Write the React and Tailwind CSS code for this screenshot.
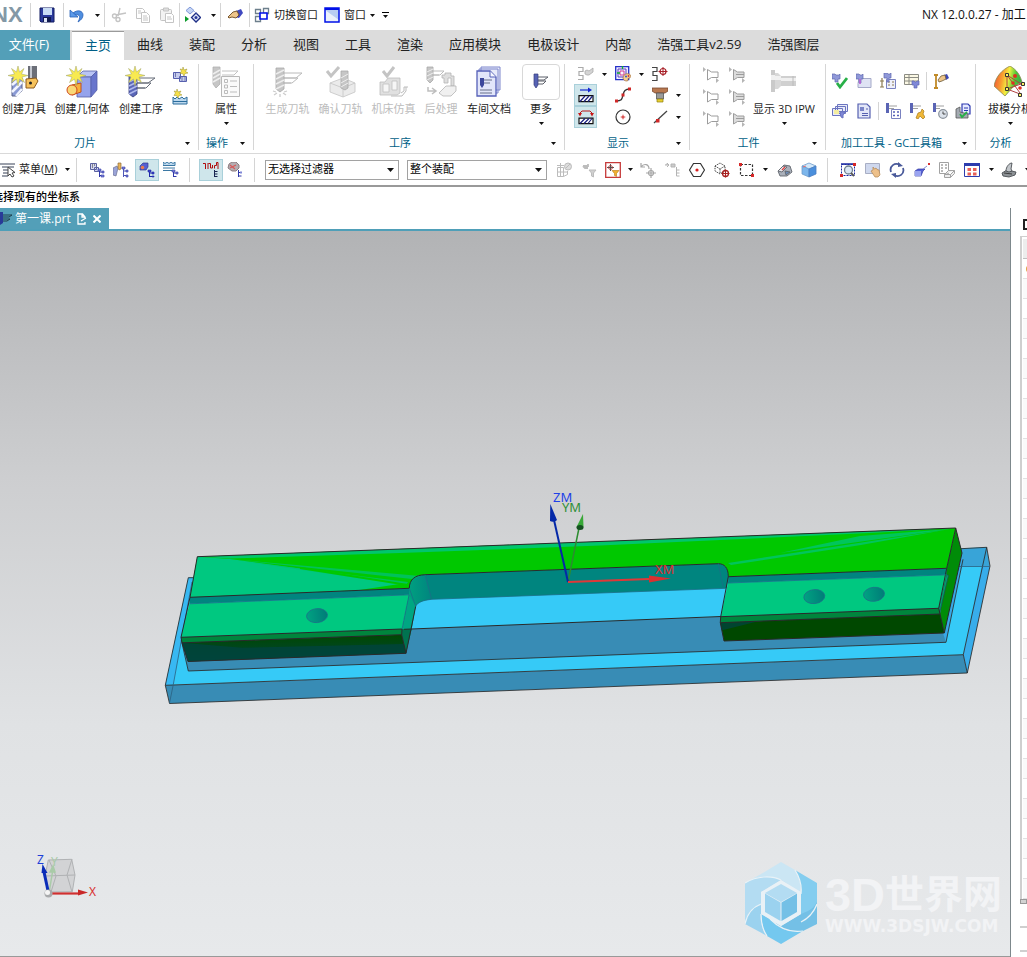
import React from "react";

const small = {
  save: (
    <g>
      <path d="M1 1h14v14H2l-1-1z" fill="#2b3a9c" stroke="#101a60" />
      <path d="M4 1h9v7H4z" fill="#c9dcf5" />
      <path d="M4 10h8v5H4z" fill="#101a50" />
      <path d="M5 11h3v4H5z" fill="#dfe6f5" />
    </g>
  ),
  undo: (
    <g>
      <path d="M4 6c5-4 10-2 10 2 0 3-2 5-5 7 2-4 2-5 1-6.500-1-1-3-1-5 0z" fill="#4f8fe0" stroke="#2a62b8" strokeWidth=".8" />
      <path d="M1 3v7l8 0z" fill="#5b9aea" stroke="#2a62b8" strokeWidth=".8" />
    </g>
  ),
  cut: (
    <g fill="none" stroke="#c4c4c4" strokeWidth="1.400">
      <path d="M9 1L7 9M15 6L5 8" />
      <circle cx="3.500" cy="9" r="2" />
      <circle cx="7" cy="12.500" r="2" />
    </g>
  ),
  copy: (
    <g fill="#fff" stroke="#c4c4c4">
      <path d="M1.500 1.500h6l2 2v8h-8z" />
      <path d="M6.500 5.500h5l3 3v7h-8z" />
      <path d="M8 9h4M8 11h5M8 13h5M3 4h3M3 6h3" />
    </g>
  ),
  paste: (
    <g fill="#f2f2f2" stroke="#c4c4c4">
      <rect x="1.500" y="2.500" width="11" height="11" rx="1" />
      <path d="M4.500 1h5v3h-5z" fill="#ddd" />
      <path d="M6.500 6.500h6l2 2v7h-8z" fill="#fff" />
      <path d="M8 10h4M8 12h5" />
    </g>
  ),
  repeat: (
    <g>
      <path d="M0 9v6l4-3z" fill="#0a9a2a" />
      <path d="M5 0l4 3.500L5 7 1 3.500z" fill="#c5d5f5" stroke="#7f97d8" />
      <path d="M11 6l4.500 4.500L11 15l-4.500-4.500z" fill="#dfe6f8" stroke="#1f2f86" strokeWidth="1.300" />
      <circle cx="11" cy="10.500" r="1.500" fill="#28389c" />
      <path d="M9 4l3 3" stroke="#7f97d8" strokeDasharray="1 1" />
    </g>
  ),
  hand: (
    <g>
      <path d="M9 4l5-2 2 4-4 5-4-1z" fill="#4048c0" />
      <path d="M1 10l5-5 4-1 2 4-3 3-4-1-3 1z" fill="#eec58a" stroke="#6b4a22" strokeWidth=".9" />
    </g>
  ),
  switchWin: (
    <g fill="#fff">
      <path d="M1.500 2.500h5v4h-5zM9.500 1.500h5v5h-5zM1.500 9.500h5v5h-5z" stroke="#6d7f8c" strokeWidth="1.300" />
      <path d="M6 6h7v6H6z" stroke="#0010e8" strokeWidth="1.600" />
    </g>
  ),
  window: (
    <g>
      <path d="M1 1h14v14H1z" fill="#b8cdf2" />
      <path d="M1 3l14 10v2H1z" fill="#fff" opacity=".7" />
      <path d="M1 1h14v14H1z" fill="none" stroke="#0010e8" strokeWidth="1.500" />
      <path d="M1 2h14" stroke="#0010e8" strokeWidth="2" />
    </g>
  ),
  programNew: (
    <g>
      <path d="M1.500 5.500h7v6h-7zM7.500 9.500h7v5h-7z" fill="#c5cbee" stroke="#565fae" />
      <path d="M3 7h1M3 9h1M9.500 11h1M9.500 13h1M12.500 11h1M12.500 13h1" stroke="#222b70" />
      <path d="M11 0l1 3 3-1-1.500 2.500L16 6l-3 .5L12 9l-1.500-2.500L8 6.500 9.500 4 8 2l2.500.500z" fill="#f6e04a" stroke="#98902c" strokeWidth=".5" />
    </g>
  ),
  methodNew: (
    <g>
      <path d="M1 15V8l2 2 2-2 2 2 3-2 2 2 3-2v7z" fill="#bcd8ee" stroke="#2b6d9c" />
      <path d="M1 12.500h14" stroke="#2b6d9c" />
      <path d="M5 0l1 3 3-1-1.500 2.500L10 6l-3 .5L6 9 4.500 6.500 2 6.500 3.500 4 2 2l2.500.5z" fill="#f6e04a" stroke="#98902c" strokeWidth=".5" />
    </g>
  ),
  menu: (
    <g>
      <path d="M0 2h15M2 5h12M3 8h6M3 11h5M2 14h6" stroke="#7b8190" strokeWidth="1.300" />
      <path d="M8 5v9l2-2 2 3 2-1-2-3 3-.5z" fill="#fff" stroke="#444" />
    </g>
  ),
  navProgram: (
    <g>
      <path d="M1.500 1.500h6v6h-6zM5.500 5.500h4v4h-4z" fill="#d5d8ee" stroke="#5b62a0" />
      <path d="M3 3h1M3 5h1M5 3h1" stroke="#333" />
      <path d="M10.500 8v7M10.500 10h4M10.500 13.500h3" stroke="#3038a8" />
      <path d="M9 7h3v2H9zM13 9h2v2h-2zM12 13h3v2h-3z" fill="#8088d8" stroke="#3038a8" strokeWidth=".6" />
    </g>
  ),
  navTool: (
    <g>
      <path d="M0 6l4-2 1 2-2 8-3-1z" fill="#9aa4d8" stroke="#6a6f90" strokeWidth=".7" />
      <path d="M5 1h3v6l-2 1-1-2z" fill="#e9b458" stroke="#8c6a3a" strokeWidth=".7" />
      <path d="M10.500 6v9M10.500 9h4M10.500 13.500h4" stroke="#5058b8" />
      <path d="M9 5h3v2H9zM13 8h2v2h-2zM13 13h2v2h-2z" fill="#8088d8" stroke="#3038a8" strokeWidth=".6" />
    </g>
  ),
  navGeom: (
    <g>
      <path d="M1 4l3-3h5v4L7 8H1z" fill="#5560d0" stroke="#333a90" strokeWidth=".7" />
      <circle cx="3.500" cy="5.500" r="1.800" fill="#e87a50" />
      <path d="M10.500 9v6M10.500 11h4M10.500 14.500h4" stroke="#2028a8" />
      <path d="M9 8h3v2H9zM13 10h2v2h-2zM13 14h2v1h-2z" fill="#4048c8" stroke="#2028a8" strokeWidth=".6" />
    </g>
  ),
  navMethod: (
    <g>
      <path d="M0 0l2 1.500L4 0l2 1.500L8 0l2 1.500L12 0v3.500H0z" fill="#bcd8ee" stroke="#3b78a4" />
      <path d="M0 6h12M0 8.500h9" stroke="#3b78a4" />
      <path d="M10.500 9v6M10.500 11h4M10.500 14.500h3" stroke="#3038a8" />
      <path d="M9 8h3v2H9zM13 10h2v2h-2z" fill="#8088d8" stroke="#3038a8" strokeWidth=".6" />
    </g>
  ),
  pathTree: (
    <g>
      <path d="M0 1.500h2.500V7M5 1v6M5.500 1.500h2V6h2V3M11.500 6.500v-3h2v-3H15V7" fill="none" stroke="#b00c0c" />
      <path d="M11.500 8v7M11.500 9.500h3M11.500 12h3M11.500 14.500h3" stroke="#1a2450" />
    </g>
  ),
  stopTree: (
    <g>
      <path d="M2 2l3-2h4l3 3v3L9 9H5L1 6z" fill="#b4acb0" stroke="#8b7c80" />
      <path d="M3 3l5 4M3 6l6-3" stroke="#d85858" strokeWidth="1.200" />
      <path d="M11.500 8v7M11.500 10.500h3M11.500 14h3" stroke="#3038a8" />
      <path d="M13 9.500h2v2h-2z" fill="#8088d8" />
    </g>
  ),
  snapGray: (
    <g fill="none" stroke="#bcbcbc">
      <path d="M.5 5.500h6v9h-6zM.5 10h10M3.500 1v13M0 3.500h7" />
      <circle cx="11" cy="4.500" r="3.500" fill="#ddd" />
      <path d="M9 6l4-4M6.500 14.500l4-2V9" />
    </g>
  ),
  filterGray: (
    <g fill="#d0d0d0" stroke="#bcbcbc">
      <path d="M2 4h5V2M2 4l2 2h3" fill="none" strokeWidth="1.800" />
      <path d="M8 8h7l-2.500 3v4l-2-1v-3z" />
    </g>
  ),
  filterRed: (
    <g>
      <path d="M.7.7h14.600v14.600H.7z" fill="#fff" stroke="#c63a3a" strokeWidth="1.300" />
      <path d="M5.500 2v7M2 5.500h7" stroke="#555" />
      <circle cx="5.500" cy="5.500" r="2" fill="none" stroke="#a33" strokeWidth=".8" />
      <path d="M7 8.500h7l-2.500 3v3l-2-1v-2z" fill="#f0b030" stroke="#b87a10" strokeWidth=".6" />
    </g>
  ),
  undoTarget: (
    <g fill="none" stroke="#a6a6a6" strokeWidth="1.200">
      <path d="M1 5c3-4 8-3 8 2M1 1v4h4" />
      <circle cx="11" cy="11" r="2.500" />
      <path d="M11 6v10M6 11h10" />
    </g>
  ),
  listGray: (
    <g fill="#ccc" stroke="#b4b4b4">
      <path d="M0 3h4l-2-2M4 3L2 5M6 2h4v3H6z" />
      <path d="M11.500 5v9M11.500 8h3M11.500 11h3M11.500 14h3" />
    </g>
  ),
  hexagon: (
    <g>
      <path d="M4.500 1.500h7l4 6.500-4 6.500h-7L.5 8z" fill="#fff" stroke="#333" strokeWidth="1.200" />
      <circle cx="8" cy="8" r="1.600" fill="#d82020" />
    </g>
  ),
  cubeTarget: (
    <g fill="none">
      <path d="M1 4l5-3 5 3v5l-5 3-5-3zM1 4l5 3 5-3M6 7v5" stroke="#444" strokeDasharray="1.500 1" />
      <circle cx="11.500" cy="11.500" r="3" stroke="#a82020" strokeWidth="1.300" />
      <path d="M11.500 7.500v8M7.500 11.500h8" stroke="#a82020" />
    </g>
  ),
  marquee: (
    <g>
      <path d="M1.500 2.500h12v11h-12z" fill="none" stroke="#333" strokeWidth="1.200" strokeDasharray="2.500 1.500" />
      <path d="M0 1h3v3H0zM12 12h3v3h-3z" fill="#d82828" />
    </g>
  ),
  eraser: (
    <g stroke="#62666e" strokeWidth=".9">
      <path d="M1 9l6-6 6 1 2 6-5 4H3z" fill="#aab0ba" />
      <path d="M1 9l5-5 4 1-5 5z" fill="#e8eaee" />
      <path d="M5 8l3-3" stroke="#e04040" strokeWidth="1.500" />
      <path d="M8 9l5 1-4 3z" fill="#6d8cb8" />
    </g>
  ),
  cubeBlue: (
    <g>
      <path d="M1 4l7-3 7 3-7 3z" fill="#d2e8fa" stroke="#6f9ccc" strokeWidth=".8" />
      <path d="M1 4l7 3v8l-7-3z" fill="#7cb6ec" stroke="#6f9ccc" strokeWidth=".8" />
      <path d="M15 4L8 7v8l7-3z" fill="#4a8fdc" stroke="#4a7cc0" strokeWidth=".8" />
      <path d="M2 5l3-1" stroke="#e37070" />
    </g>
  ),
  fitZoom: (
    <g>
      <path d="M1.500 2.500h13v11h-13z" fill="none" stroke="#1a28a0" strokeDasharray="2 1" />
      <path d="M1 2h14" stroke="#1a28a0" strokeWidth="1.500" />
      <circle cx="8.500" cy="8" r="4" fill="#dbe8f4" stroke="#6e7f90" strokeWidth="1.300" />
      <path d="M11 11l3 3" stroke="#555" strokeWidth="1.800" />
      <path d="M13 1h3v3h-3zM0 12h3v3H0z" fill="#d82828" />
    </g>
  ),
  pan: (
    <g>
      <path d="M.5 1.500h14v10H.500z" fill="#cfd8ee" stroke="#a8aec4" />
      <path d="M6 9l2-1V5l1.500 2L11 6l1 1.500 2 .5 1 5-2 2h-3z" fill="#edc08a" stroke="#b08552" strokeWidth=".7" />
    </g>
  ),
  rotate: (
    <g fill="none" stroke="#4a5a9a" strokeWidth="1.800">
      <path d="M2 10C0 4 6 0 11 3M14 6c2 6-4 10-9 7" />
      <path d="M9 0l5 4-5 1zM7 16l-5-4 5-1z" fill="#4a5a9a" stroke="none" />
    </g>
  ),
  persp: (
    <g>
      <path d="M1 9l3-2h7l-2 2-2 5-6 0z" fill="#5560d4" stroke="#3038a0" strokeWidth=".7" />
      <path d="M1 9h6v5H1z" fill="#9aa4f0" />
      <path d="M9 7l4-3" stroke="#8890d8" />
      <path d="M14 1h2v2h-2z" fill="#d83030" />
    </g>
  ),
  sheet: (
    <g fill="#fff" stroke="#a2a2a2">
      <path d="M.500.500h9v11h-9z" />
      <path d="M2 3h2M6 3h2M2 6h2M6 6h2M2 9h2" strokeWidth="1.500" />
      <path d="M5.500 12.500l4-4h6v3l-4 4h-6zM5.500 12.500h6l4-4M11.500 12.500v3" fill="#eee" />
    </g>
  ),
  layout: (
    <g>
      <path d="M.5 1.500h15v13H.500z" fill="#fff" stroke="#2c3cae" />
      <path d="M0 1h16v3H0z" fill="#2c3cae" />
      <path d="M3.500 6H7v3H3.500zM9 6h3.500v3H9zM3.500 10.500H7v3H3.500zM9 10.500h3.500v3H9z" fill="#e86058" />
    </g>
  ),
  shading: (
    <g stroke="#4a4e52" strokeWidth=".9">
      <path d="M1 11l5-3 9 2-1 3-6 2-6-1z" fill="#8d9296" />
      <path d="M5 9c0-4 3-8 6-8l-1 6 1 2-3 1z" fill="#c2c6ca" />
      <path d="M3 11l8 1" stroke="#333" />
    </g>
  ),
  toolPathGray: (
    <g fill="none" stroke="#aaa" strokeWidth="1.200">
      <path d="M0 1.500h5v4H1v4h4v4H0" />
      <path d="M7 5l2-1 2 1 4-3v4l-4 3H9l-2-1z" fill="#d4d4d4" strokeWidth=".8" />
    </g>
  ),
  palette: (
    <g>
      <path d="M.7.7h13v13h-13z" fill="#f0f0ff" stroke="#2530c8" strokeWidth="1.300" />
      <path d="M3 3h8v8H3z" fill="none" stroke="#6040c0" />
      <path d="M5 5h4v4H5z" fill="#f8f8ff" stroke="#d03890" />
      <path d="M7.500 0v3M2 7h3" stroke="#10b030" strokeWidth="1.300" />
      <path d="M8 12c0-3 3-5 6-4s2 4 0 4 0 3-2 3-4-1-4-3z" fill="#f4cf90" stroke="#a06a3a" strokeWidth=".7" />
      <circle cx="11" cy="10.500" r="1" fill="#3050d0" />
      <circle cx="13.500" cy="10" r=".9" fill="#d03030" />
    </g>
  ),
  pathTarget: (
    <g fill="none">
      <path d="M0 1.500h5v4H1v4h4v5H0" stroke="#444" strokeWidth="1.200" />
      <circle cx="11" cy="5.500" r="3" stroke="#a82028" strokeWidth="1.200" />
      <path d="M11 1v9M6.500 5.500h9" stroke="#a82028" />
    </g>
  ),
  hatchArrow: (
    <g>
      <path d="M2 3h9" stroke="#1428d0" strokeWidth="1.200" />
      <path d="M10 .5L14 3l-4 2.500z" fill="#1428d0" />
      <path d="M1 8.700h14v6H1z" fill="#fff" stroke="#111" strokeWidth="1.200" />
      <path d="M2 14.500l5-5.500M6 14.500L11 9M10 14.500L14.500 9" stroke="#1a2080" strokeWidth="1.200" />
    </g>
  ),
  hatchLoop: (
    <g>
      <path d="M2 6V4l2-2h8l2 2v2" fill="none" stroke="#b81818" />
      <path d="M0 4h4L2 7.500zM12 4h4l-2 3.500z" fill="#c81818" />
      <path d="M1 9.200h14v5.500H1z" fill="#fff" stroke="#111" strokeWidth="1.200" />
      <path d="M2 14.500l5-5M6 14.500l5-5M10 14.500l4-5" stroke="#1a2080" strokeWidth="1.200" />
    </g>
  ),
  curve: (
    <g>
      <path d="M1 14c6 0 6-2 7-6s2-6 7-6" fill="none" stroke="#333" strokeWidth="1.300" />
      <path d="M0 12.500h3v3H0zM6.500 6.500h3v3h-3zM13 .5h3v3h-3z" fill="#d02828" />
    </g>
  ),
  circle: (
    <g>
      <circle cx="8" cy="8" r="7" fill="#fff" stroke="#333" strokeWidth="1.200" />
      <circle cx="8" cy="8" r="1.500" fill="#d02828" />
      <path d="M8 5.500v5M5.500 8h5" stroke="#e07070" strokeWidth=".8" />
    </g>
  ),
  holder: (
    <g>
      <path d="M0 1h16v3l-3 2H3L0 4z" fill="#b87850" stroke="#7a4a30" strokeWidth=".8" />
      <path d="M4.500 6h7v6h-7z" fill="#9a9a9a" stroke="#555" strokeWidth=".8" />
      <path d="M5 12h6v3H5z" fill="#e8d030" stroke="#8c7c10" strokeWidth=".7" />
    </g>
  ),
  line: (
    <g>
      <path d="M2 14L15 2" stroke="#444" strokeWidth="1.300" />
      <path d="M4 10h3.500v3.500H4z" fill="#d02828" />
    </g>
  ),
  ipwA: (
    <g fill="#fff" stroke="#9c9c9c">
      <path d="M4.500 2.500l4 2.500h6.500v5.500H8.500l-4 2.500z" />
      <path d="M0 0v5l3-2.500z" fill="#b5b5b5" stroke="none" />
      <path d="M13 11v5l3-2.500z" fill="#b5b5b5" stroke="none" />
    </g>
  ),
  ipwB: (
    <g fill="#dcdcdc" stroke="#9c9c9c">
      <path d="M4.500 2.500l4 2.500h6.500v5.500H8.500l-4 2.500z" />
      <path d="M7 7.500h8" />
      <path d="M0 0v5l3-2.500z" fill="#b5b5b5" stroke="none" />
      <path d="M13 11v5l3-2.500z" fill="#b5b5b5" stroke="none" />
    </g>
  ),
  gcCheck: (
    <g>
      <path d="M0 1h3l1 1h3l1-1v5H6v3H3V6H0z" fill="#8f98d8" stroke="#6068b0" strokeWidth=".7" />
      <path d="M5 10l3 4 7-9" fill="none" stroke="#28b048" strokeWidth="2.800" />
    </g>
  ),
  gcPart: (
    <g>
      <path d="M3 5.500h12v9H2v-4z" fill="#dfe3f4" stroke="#a4a9c8" />
      <path d="M0 1h3l1 1h2l1-1v5H5v4H3V6H0z" fill="#8f98d8" stroke="#6068b0" strokeWidth=".7" />
      <path d="M4 6v5" stroke="#c060d8" strokeWidth="1.500" />
    </g>
  ),
  gcTree: (
    <g>
      <path d="M6.500 6.500h9v9h-9z" fill="#eef0fb" stroke="#7a82c0" />
      <path d="M8 9h2M8 12h2M12 9h2M12 12h2M0 8h4M2 5v9M0 14h4" stroke="#8a7a50" strokeWidth="1.200" />
      <path d="M4 0h3l1 1h2l1-1v5H9v4H7V5H4z" fill="#8f98d8" stroke="#6068b0" strokeWidth=".7" />
    </g>
  ),
  gcTable: (
    <g>
      <path d="M.5 1.500h14v10H.5zM.5 4.500h14M.5 8h14M5 1.500v10" fill="#fbf8e4" stroke="#8c8c84" />
      <path d="M8 8h2l1 1h1l1-1h2v4h-2v3h-3v-3H8z" fill="#7f88d8" stroke="#6068b0" strokeWidth=".7" />
    </g>
  ),
  gcFlag: (
    <g>
      <path d="M1 2h4M1 15h4M3 2v13" stroke="#c08a28" strokeWidth="1.800" />
      <path d="M11 2l3-1 2 4-3 2z" fill="#3c48b8" />
      <path d="M5 7l3-4 4-1 1 4-4 2-3 1z" fill="#eec58a" stroke="#6b5a3a" strokeWidth=".8" />
    </g>
  ),
  gcCards: (
    <g fill="#e9ecf8" stroke="#6b74c0">
      <path d="M5.500 1.500h10v7h-10zM3.500 3.500h10v7h-10zM.5 5.500h10v7H.500z" />
      <path d="M8 9h5l-2 3v3l-2-1z" fill="#8088d8" />
      <path d="M2 7h5v4H2z" fill="#f4eda0" stroke="none" />
    </g>
  ),
  gcDoc: (
    <g>
      <path d="M2 1h9l3 3v11H2z" fill="#e2e6f8" stroke="#5560b0" strokeWidth="1.200" />
      <path d="M4 4h4v4H4z" fill="#7a84c8" />
      <path d="M6 10.500h6M6 12.500h6M10 6h2" stroke="#5560b0" />
    </g>
  ),
  gcList: (
    <g>
      <path d="M1 0h3v10H1z" fill="#5a64b4" />
      <path d="M4 3h8M4 5.500h5" stroke="#888" strokeWidth=".8" />
      <path d="M6.500 6.500h9v9h-9z" fill="#fff" stroke="#7a82c0" />
      <path d="M8 9h2M8 12.500h2M12 9h2M12 12.500h2" stroke="#5560b8" strokeWidth="1.500" />
    </g>
  ),
  gcWrench: (
    <g>
      <path d="M1 0h3v10H1z" fill="#5a64b4" />
      <path d="M4 3h8M4 5.500h5" stroke="#888" strokeWidth=".8" />
      <path d="M7 15l2-5 3-1 1-3 2 2-1 3 2 3-2 2-3-3-2 3z" fill="#f0b838" stroke="#a87818" strokeWidth=".7" />
    </g>
  ),
  gcClock: (
    <g>
      <path d="M1 0h3v9H1z" fill="#5a64b4" />
      <path d="M4 3h8M4 5.500h4" stroke="#888" strokeWidth=".8" />
      <circle cx="11" cy="11" r="4.300" fill="#dce2ea" stroke="#8a929c" strokeWidth="1.200" />
      <path d="M11 8.500V11h2.500" fill="none" stroke="#444" />
    </g>
  ),
  gcPrint: (
    <g>
      <path d="M7 1h6l2 2v8H7z" fill="#e6eaff" stroke="#2c38b0" strokeWidth="1.200" />
      <path d="M9 5h4M9 7.500h4" stroke="#2c38b0" />
      <path d="M1 6l4-2v5l8 2v4H1z" fill="#a4aab2" stroke="#555" strokeWidth=".8" />
      <path d="M5 11l2 3 5-5" fill="none" stroke="#28b048" strokeWidth="1.800" />
    </g>
  ),
};

const star = (
  <path
    d="M10 0l1.500 6L16 2.500 13.500 8l6.500 1.500-6 1.500 2.500 5.500-5-3.500L10 20l-1.500-7-5 3.500L6 11 0 9.500 6.500 8 3.500 2.500 8.500 6z"
    fill="#f8ea50"
    stroke="#a0a468"
    strokeWidth=".5"
  />
);

const large = {
  tool: (
    <g>
      <path d="M20 0h9v14h-9z" fill="#6c6f78" />
      <path d="M22 0h2v14h-2z" fill="#c4c8d0" />
      <path d="M18 13l10-1 2 3-4 7h-8z" fill="#f6c25c" stroke="#8c5a1c" />
      <circle cx="22.500" cy="17" r="1.500" fill="#222" />
      <path d="M4 12h10v13l-5 5H4z" fill="#8a9ad4" stroke="#5a6288" />
      <path d="M4 26l10-10M4 19l7-6M8 30l6-7" stroke="#f2f5ff" strokeWidth="2.500" />
      {star}
    </g>
  ),
  geometry: (
    <g>
      <path d="M11 11l6-6h14l-6 6z" fill="#b9c4f4" stroke="#5660a8" strokeWidth=".8" />
      <path d="M11 11h14v20H11z" fill="#95a3ec" stroke="#5660a8" strokeWidth=".8" />
      <path d="M25 11l6-6v19l-6 7z" fill="#6875cc" stroke="#5660a8" strokeWidth=".8" />
      <path d="M6 19l9-2v9l-9 3z" fill="#f6b03c" stroke="#c0501c" />
      <circle cx="6" cy="24" r="5" fill="#f9d878" stroke="#d0481c" />
      {star}
    </g>
  ),
  operation: (
    <g fill="none">
      <path d="M12 12h18l-7 5H12M12 17h14l-5 5h-9M12 22h8" stroke="#666c78" />
      <path d="M4 10h8v18l-4 3-4-3z" fill="#5a66b8" stroke="#363e7c" strokeWidth=".8" />
      <path d="M4 16l8-4M4 20l8-4M4 24l8-4M4 28l8-4" stroke="#aeb8ec" strokeWidth="1.500" />
      {star}
    </g>
  ),
  attributes: (
    <g>
      <path d="M12 5h16l-4 4H12M12 11h6" fill="none" stroke="#c2c2c2" />
      <path d="M3 1h7v17l-4 4-3-4z" fill="#c6c6c6" stroke="#b0b0b0" strokeWidth=".8" />
      <path d="M3 8l7-4M3 12l7-4M3 16l7-4" stroke="#eee" strokeWidth="1.500" />
      <path d="M11.500 10.500h18v20h-18z" fill="#fafafa" stroke="#b8b8b8" />
      <path d="M14.500 13.500h3v3h-3zM14.500 19h3v3h-3zM14.500 24.500h3v3h-3zM20 15h7M20 20.500h7M20 26h7" fill="none" stroke="#bcbcbc" />
    </g>
  ),
  generate: (
    <g>
      <path d="M12 7h18l-6 5H12M12 12h14l-6 5h-8M12 17h7" fill="none" stroke="#bababa" />
      <path d="M4 2h8v21l-4 3-4-3z" fill="#c6c6c6" stroke="#a8a8a8" strokeWidth=".8" />
      <path d="M4 8l8-4M4 13l8-4M4 18l8-4M4 23l8-4" stroke="#ececec" strokeWidth="1.500" />
      <path d="M1 25l3 1M2 29l3-2M8 28v3M14 29l-3-2M15 25l-3 1" stroke="#ccc" strokeWidth="1.300" />
    </g>
  ),
  verify: (
    <g>
      <path d="M5 17l13-5 12 5v9l-12 5-13-5z" fill="#ebebeb" stroke="#c4c4c4" strokeWidth=".8" />
      <path d="M5 17l13 5 12-5M18 22v9" fill="none" stroke="#c4c4c4" strokeWidth=".8" />
      <path d="M16 5h7v17l-3 2-4-2z" fill="#c6c6c6" stroke="#a8a8a8" strokeWidth=".8" />
      <path d="M16 12l7-4M16 17l7-4M16 21l7-4" stroke="#eee" />
      <path d="M2 5l4 5L14 1" fill="none" stroke="#c4c4c4" strokeWidth="3" />
    </g>
  ),
  simulate: (
    <g>
      <path d="M2 16h5l3-4h12v15l-3 2H2z" fill="#e0e0e0" stroke="#bcbcbc" strokeWidth=".8" />
      <path d="M5 18h6v8H5zM14 15h5v9h-5z" fill="#f6f6f6" stroke="#c0c0c0" strokeWidth=".8" />
      <path d="M23 27l3-2v-4h4M28 21v4l-4 5H13" fill="none" stroke="#bcbcbc" />
      <path d="M5 5l4 5L16 1" fill="none" stroke="#c4c4c4" strokeWidth="3" />
    </g>
  ),
  post: (
    <g>
      <path d="M8 5h11l-4 4H8M8 9h6" fill="none" stroke="#bcbcbc" />
      <path d="M2 1h6v13l-3 3-3-3z" fill="#c6c6c6" stroke="#a8a8a8" strokeWidth=".8" />
      <path d="M2 6l6-3M2 10l6-3M2 14l6-3" stroke="#eee" />
      <path d="M17 9h3V7h6v3h3v10h-3v-8h-3v5h-4v-5h-2z" fill="#dedede" stroke="#b4b4b4" strokeWidth=".8" />
      <path d="M14 27l7-7h10v5l-5 5h-8z" fill="#f0f0f0" stroke="#b4b4b4" strokeWidth=".8" />
      <path d="M3 21v4h7M7 22l4 3-4 3" fill="none" stroke="#bebebe" strokeWidth="1.500" />
    </g>
  ),
  shopDoc: (
    <g>
      <path d="M8 1h19v23H8zM6 3h19v24H6z" fill="#e8ebfa" stroke="#7c86cc" />
      <path d="M4 5h13l6 6v19H4z" fill="#e2e6fa" stroke="#5560b8" strokeWidth="1.300" />
      <path d="M17 5v6h6" fill="#f6f8ff" stroke="#5560b8" />
      <path d="M7 12h4v7l-2 3-2-3z" fill="#3c479c" />
      <path d="M11 14h8M11 17h6M7 24h12M7 27h12" stroke="#666e88" />
    </g>
  ),
  more: (
    <g>
      <path d="M13 11h10l-4 3h-6M13 15h8l-3 3h-5" fill="none" stroke="#5a5e68" />
      <path d="M9 8h4v11l-2 3-2-3z" fill="#5663b4" stroke="#363e7c" strokeWidth=".7" />
    </g>
  ),
  ipw: (
    <g>
      <path d="M3 4h4v22H3z" fill="#cacaca" />
      <path d="M7 7h3l3 3v10l-3 3H7z" fill="#d8d8d8" />
      <path d="M13 10h15v10H13z" fill="#d0d0d0" />
      <path d="M3 9h4v5H3zM7 10h6v4H7zM13 12h15v3H13z" fill="#f0f0f0" />
      <path d="M25 10v10" stroke="#bcbcbc" />
    </g>
  ),
  draft: (
    <g>
      <defs>
        <linearGradient id="draftFill" x1="0" x2="1" y1="0.300" y2="0.500">
          <stop offset="0" stopColor="#f05038" />
          <stop offset=".3" stopColor="#f8a030" />
          <stop offset=".5" stopColor="#f2f040" />
          <stop offset=".75" stopColor="#48c838" />
          <stop offset="1" stopColor="#38a848" />
        </linearGradient>
      </defs>
      <path d="M0 20C2 10 8 4 16 0c7 4 10 9 12 16l-9 5-8 9z" fill="url(#draftFill)" stroke="#8c8c50" strokeWidth=".8" />
      <path d="M13 9v14l14-5zM13 9l13 18M13 23l13 5" fill="none" stroke="#b04040" />
      <path d="M11.500 7.500h3v3h-3zM11.500 21.500h3v3h-3zM27.500 16.500h3v3h-3zM24.500 27.500h3v3h-3z" fill="#fff060" stroke="#333" />
      <circle cx="21" cy="10" r="2" fill="#e03020" />
      <circle cx="19" cy="17" r="1.800" fill="#e03020" />
      <circle cx="26" cy="22" r="1.800" fill="#e03020" />
    </g>
  ),
};

const Sm = ({ name }) => (
  <svg viewBox="0 0 16 16" className="size-4 shrink-0" aria-hidden="true">
    {small[name]}
  </svg>
);

const Lg = ({ name }) => (
  <svg viewBox="0 0 32 32" className="size-8 shrink-0" aria-hidden="true">
    {large[name]}
  </svg>
);

const Arrow = () => (
  <svg viewBox="0 0 5 3" className="h-[3px] w-[5px] shrink-0" aria-hidden="true">
    <path d="M0 0h5L2.500 3z" fill="#111" />
  </svg>
);

const Drop = ({ label = "展开", className = "h-5 w-3" }) => (
  <button aria-label={label} className={"flex shrink-0 items-center justify-center " + className}>
    <Arrow />
  </button>
);

const IconButton = ({ name, label, active, className = "h-[22px] w-6" }) => (
  <button
    aria-label={label}
    className={
      "flex shrink-0 items-center justify-center " +
      (active ? "border border-[#a9d0da] bg-[#cfe6eb] " : "") +
      className
    }
  >
    <Sm name={name} />
  </button>
);

const BigButton = ({ name, label, width, disabled, arrow, boxed }) => (
  <button
    disabled={disabled}
    className={
      "flex shrink-0 flex-col items-center whitespace-nowrap text-[11px] leading-4 " +
      (disabled ? "text-[#bcbcbc] " : "text-[#1e1e1e] ") +
      width
    }
  >
    <span
      className={
        boxed
          ? "flex h-9 w-[38px] items-center justify-center rounded border border-[#d8d8d8]"
          : "flex h-9 items-center justify-center"
      }
    >
      <Lg name={name} />
    </span>
    <span className="mt-px">{label}</span>
    {arrow && (
      <span className="flex h-3 items-center">
        <Arrow />
      </span>
    )}
  </button>
);

const Group = ({ title, width, children }) => (
  <section className={"mt-1 mb-[3px] flex shrink-0 flex-col border-r border-[#d6d6d6] " + width}>
    <div className="flex h-[72px] shrink-0 items-start">{children}</div>
    <div className="flex h-3.5 shrink-0 items-center">
      <h2 className="flex-1 text-center text-[11px] leading-3.5 whitespace-nowrap text-[#005f87]">{title}</h2>
      <Drop label={title + "选项"} className="mr-1 h-3 w-3.5" />
    </div>
  </section>
);

const Sep = ({ className = "h-6" }) => <span className={"w-px shrink-0 bg-[#d4d4d4] " + className} />;

const Combo = ({ value, label, width }) => (
  <label className={"relative block shrink-0 " + width}>
    <span className="sr-only">{label}</span>
    <select className="block h-5 w-full appearance-none border border-[#a2a2a2] bg-white pl-0.5 text-[11px] text-black outline-none">
      <option>{value}</option>
    </select>
    <svg viewBox="0 0 7 4" className="pointer-events-none absolute top-2 right-[5px] h-1 w-[7px]" aria-hidden="true">
      <path d="M0 0h7L3.500 4z" fill="#111" />
    </svg>
  </label>
);

const tabs = ["曲线", "装配", "分析", "视图", "工具", "渲染", "应用模块", "电极设计", "内部", "浩强工具v2.59", "浩强图层"];

function TitleBar() {
  return (
    <header className="flex h-[30px] shrink-0 items-center bg-white text-[11px] text-[#222]">
      <span className="-ml-2 w-[34px] shrink-0 font-['Liberation_Sans'] text-[22px] leading-6 font-bold text-[#8398a6]">NX</span>
      <span className="w-1 shrink-0" />
      <Sep />
      <IconButton name="save" label="保存" className="h-6 w-8" />
      <Sep />
      <IconButton name="undo" label="撤消" className="h-6 w-[26px]" />
      <Drop className="h-5 w-3.5" />
      <Sep />
      <IconButton name="cut" label="剪切" className="ml-0.5 h-6 w-6" />
      <IconButton name="copy" label="复制" className="h-6 w-6" />
      <IconButton name="paste" label="粘贴" className="h-6 w-6" />
      <Sep />
      <IconButton name="repeat" label="重复命令" className="h-6 w-[26px]" />
      <Drop className="h-5 w-3.5" />
      <Sep />
      <IconButton name="hand" label="触控模式" className="h-6 w-7" />
      <Sep />
      <button className="flex shrink-0 items-center gap-1 pl-1">
        <Sm name="switchWin" />
        切换窗口
      </button>
      <button className="flex shrink-0 items-center gap-1 pl-1.5">
        <Sm name="window" />
        窗口
        <Arrow />
      </button>
      <button aria-label="自定义" className="ml-1 flex w-3 shrink-0 flex-col items-center gap-0.5">
        <span className="h-px w-[7px] bg-black" />
        <Arrow />
      </button>
      <h1 className="ml-auto w-[105px] shrink-0 overflow-hidden text-[12px] whitespace-nowrap text-[#111]">NX 12.0.0.27 - 加工</h1>
    </header>
  );
}

function TabRow() {
  return (
    <nav className="flex h-[30px] shrink-0 bg-[#dcdcdc] text-[13px] whitespace-nowrap text-[#222]">
      <button className="mr-0.5 w-[70px] shrink-0 bg-[#539fb8] pr-3 text-white">文件(F)</button>
      <button className="mt-px shrink-0 border-t border-[#9a9a9a] bg-white px-[13px] text-[#005f87]">主页</button>
      {tabs.map((t) => (
        <button key={t} className="shrink-0 px-[13px]">
          {t}
        </button>
      ))}
    </nav>
  );
}

function Ribbon() {
  return (
    <div className="flex h-[93px] shrink-0 bg-white">
      <Group title="刀片" width="w-[209px] -ml-2.5">
        <span className="w-2.5 shrink-0" />
        <BigButton name="tool" label="创建刀具" width="w-12" />
        <BigButton name="geometry" label="创建几何体" width="w-[68px]" />
        <BigButton name="operation" label="创建工序" width="w-[50px]" />
        <div className="ml-0.5 flex flex-col">
          <IconButton name="programNew" label="创建程序" />
          <IconButton name="methodNew" label="创建方法" />
        </div>
      </Group>
      <Group title="操作" width="w-[55px]">
        <BigButton name="attributes" label="属性" width="w-full" arrow />
      </Group>
      <Group title="工序" width="w-[311px]">
        <span className="w-[7px] shrink-0" />
        <BigButton name="generate" label="生成刀轨" width="w-[53px]" disabled />
        <BigButton name="verify" label="确认刀轨" width="w-[53px]" disabled />
        <BigButton name="simulate" label="机床仿真" width="w-[53px]" disabled />
        <BigButton name="post" label="后处理" width="w-[42px]" disabled />
        <BigButton name="shopDoc" label="车间文档" width="w-[54px]" />
        <BigButton name="more" label="更多" width="w-[50px]" arrow boxed />
      </Group>
      <Group title="显示" width="w-[125px]">
        <div className="grid grid-cols-[25px_12px_25px_12px_25px_12px] items-center justify-items-center pl-2">
          <IconButton name="toolPathGray" label="刀轨" className="h-5 w-6" />
          <Drop />
          <IconButton name="palette" label="颜色" className="h-5 w-6" />
          <Drop />
          <IconButton name="pathTarget" label="定位" className="h-5 w-6" />
          <span />
          <IconButton name="hatchArrow" label="显示运动" active className="h-[22px] w-[23px]" />
          <span />
          <IconButton name="curve" label="曲线" />
          <span />
          <IconButton name="holder" label="刀柄" />
          <Drop />
          <IconButton name="hatchLoop" label="显示切削" active className="h-[22px] w-[23px]" />
          <span />
          <IconButton name="circle" label="圆" />
          <span />
          <IconButton name="line" label="直线" />
          <Drop />
        </div>
      </Group>
      <Group title="工件" width="w-[136px]">
        <div className="grid shrink-0 grid-cols-[26px_26px] justify-items-center pl-2">
          {["a", "b", "c"].map((k) => (
            <React.Fragment key={k}>
              <IconButton name="ipwA" label={"工件 " + k} />
              <IconButton name="ipwB" label={"毛坯 " + k} />
            </React.Fragment>
          ))}
        </div>
        <BigButton name="ipw" label="显示 3D IPW" width="w-[68px]" arrow />
      </Group>
      <Group title="加工工具 - GC工具箱" width="w-[150px]">
        <div className="flex flex-col gap-2 pt-1.5 pl-0.5">
          <div className="flex items-center">
            <IconButton name="gcCheck" label="检查" />
            <IconButton name="gcPart" label="部件" />
            <IconButton name="gcTree" label="结构" />
            <IconButton name="gcTable" label="表格" />
            <Sep className="mx-0.5 h-[18px]" />
            <IconButton name="gcFlag" label="标记" />
          </div>
          <div className="flex items-center">
            <IconButton name="gcCards" label="卡片" />
            <IconButton name="gcDoc" label="文档" />
            <Sep className="mx-0.5 h-[18px]" />
            <IconButton name="gcList" label="列表" />
            <IconButton name="gcWrench" label="维护" className="h-[22px] w-[23px]" />
            <IconButton name="gcClock" label="时间" className="h-[22px] w-[23px]" />
            <IconButton name="gcPrint" label="输出" />
          </div>
        </div>
      </Group>
      <Group title="分析" width="w-[68px]">
        <span className="w-2 shrink-0" />
        <BigButton name="draft" label="拔模分析" width="w-[52px]" arrow />
      </Group>
    </div>
  );
}

function SelectionBar() {
  return (
    <div className="flex h-[34px] shrink-0 items-center border-t border-b-2 border-t-[#d9d9d9] border-b-[#999] bg-white">
      <button className="flex w-[70px] shrink-0 items-center gap-[3px] text-[11px] whitespace-nowrap text-[#222]">
        <Sm name="menu" />
        <span className="flex-1 text-left">
          菜单(<u>M</u>)
        </span>
        <Arrow />
      </button>
      <Sep className="ml-1.5 h-6" />
      <IconButton name="navProgram" label="程序顺序视图" className="ml-2 h-[22px] w-6" />
      <IconButton name="navTool" label="机床视图" />
      <IconButton name="navGeom" label="几何视图" active className="ml-0.5 h-[22px] w-6" />
      <IconButton name="navMethod" label="加工方法视图" />
      <Sep className="ml-1.5 h-6" />
      <IconButton name="pathTree" label="刀轨列表" active className="ml-[9px] h-[22px] w-6" />
      <IconButton name="stopTree" label="过切检查" />
      <Sep className="ml-[7px] h-6" />
      <span className="w-2.5 shrink-0" />
      <Combo label="类型过滤器" value="无选择过滤器" width="w-[134px]" />
      <span className="w-2 shrink-0" />
      <Combo label="选择范围" value="整个装配" width="w-[140px]" />
      <IconButton name="snapGray" label="捕捉" className="ml-1.5 h-[22px] w-6" />
      <IconButton name="filterGray" label="重置过滤" />
      <IconButton name="filterRed" label="常规选择过滤器" />
      <Drop className="h-5 w-2.5" />
      <IconButton name="undoTarget" label="恢复" className="ml-px h-[22px] w-6" />
      <IconButton name="listGray" label="列表" className="h-[22px] w-[25px]" />
      <IconButton name="hexagon" label="多边形" />
      <IconButton name="cubeTarget" label="体目标" className="h-[22px] w-[26px]" />
      <IconButton name="marquee" label="框选" />
      <Drop className="h-5 w-3" />
      <IconButton name="eraser" label="着色" className="ml-0.5 h-[22px] w-6" />
      <IconButton name="cubeBlue" label="实体" />
      <Sep className="ml-1.5 h-6" />
      <IconButton name="fitZoom" label="适合窗口" className="ml-2 h-[22px] w-6" />
      <IconButton name="pan" label="平移" className="h-[22px] w-[25px]" />
      <IconButton name="rotate" label="旋转" />
      <IconButton name="persp" label="透视" className="h-[22px] w-[26px]" />
      <IconButton name="sheet" label="图纸" />
      <IconButton name="layout" label="布局" className="h-[22px] w-[26px]" />
      <Drop className="h-5 w-3" />
      <IconButton name="shading" label="渲染样式" />
      <Drop className="h-5 w-3" />
    </div>
  );
}

function Model() {
  const edge = { fill: "none", stroke: "#2a2a2a", strokeWidth: 1 };
  return (
    <svg viewBox="0 231 1010 725" className="absolute top-0 left-0 h-[725px] w-[1010px]" role="img" aria-label="三维模型">
      <defs>
        <linearGradient id="hole" x1="0" x2="1">
          <stop offset="0" stopColor="#00a382" />
          <stop offset="1" stopColor="#007c78" />
        </linearGradient>
        <linearGradient id="dark" x1="0" x2="0" y1="0" y2="1">
          <stop offset="0" stopColor="#004800" />
          <stop offset="1" stopColor="#00443c" />
        </linearGradient>
        <linearGradient id="corner" x1="0" x2="1">
          <stop offset="0" stopColor="#00a880" />
          <stop offset="1" stopColor="#00857f" />
        </linearGradient>
      </defs>

      <path d="M188.300 577.700L165.300 685.300 963.300 654.700 986.700 547.300z" fill="#36caf7" />
      <path d="M188.300 577.700h5L173.300 684.500 165.300 685.300z" fill="#38b8f2" />
      <path d="M961 548.700l25.700-1.400L990 566l-33 .500z" fill="#38a4d8" />
      <path d="M963.300 654.700l18.400-88.500h8.300l-22.700 106.800z" fill="#38adeb" />
      <path d="M165.300 685.300l798-30.600 4 18.300-797.800 30.500z" fill="#388cb5" />
      <path d="M181.500 638L940 608l6 34.300-757.700 28.700z" fill="#388cb5" />
      <path d="M962.700 560L946 642.300l-3-9 19-85z" fill="#38a8e6" />

      <g {...edge} strokeOpacity=".85">
        <path d="M193 577.700h-4.700L165.300 685.300l4.200 18.200 797.800-30.500 22.700-107-3.300-18.700-25.700 1.400" />
        <path d="M165.300 685.300l798-30.600 4 18.300M963.300 654.700l23.400-107.400M188.300 671l757.700-28.700 17-83M188.300 671l-7-31" />
      </g>
      <path d="M192 582L173.300 684.500 169.500 703M957 566.500h33" fill="none" stroke="#2b5f80" strokeWidth=".8" />

      <path d="M409.300 588.300L727 575l-.3 13.300L722 616.300 404 629.300z" fill="#36caf7" />
      <path d="M409.300 588.300c0-9 6-13.300 15.700-13.600L718.300 563.700c6 0 10 4 10 13l-1.600 11.600-295 11c-9 1-14 3-16 7z" fill="#00857f" />
      <path d="M409.300 588.300c0-9 6-13.300 15.700-13.600l6.700 24.600c-9 1-14 3-16 7L411.700 629 406 653.300l-4.300-19z" fill="url(#corner)" />
      <path d="M409 595L402 630l-.3 4.300L406 653.300l5.700-24.300z" fill="#007350" />
      <path d="M409 595l6.700 11-4 23h-9.500z" fill="#00a682" />

      <path
        d="M197.300 556.700L955.700 528l-9 40.300-218.400 8.400c0-9-4-13-10-13L425 574.700c-9.700.3-15.700 4.600-15.700 13.600L190 597.300z"
        fill="#00c800"
      />
      <path d="M197.300 556.700L230 559l176 24-48 7.300L190 597.300z" fill="#00c880" />
      <path d="M197.300 556.700L955.700 528 880 532.500 600 545.500 400 553 230 558.500z" fill="#00c66c" />
      <path d="M230 559l190 17-8 3zM240 561l168 21-2 3z" fill="#00c070" opacity=".8" />
      <path d="M300 568l108 17" stroke="#00c800" strokeWidth="2" />
      <path d="M950 529L728 563l3 2 130-20zM950 529L860 536l-80 17z" fill="#00c46c" opacity=".85" />
      <path d="M955.700 528L962 553l-17.700 80L940 614l6.700-45.700z" fill="#008c08" />
      <path d="M946.500 574.500l2 1-9 38-1-5z" fill="#00a070" stroke="#1a5050" strokeWidth=".8" />

      <path d="M190 597.300l219.300-9-.3 6.500-219.500 9z" fill="#00857f" />
      <path d="M728.300 576.700l218.400-8.400-.3 6.500L728 583z" fill="#00857f" />
      <path d="M189.500 603.800l219.500-9-7 34.200-221 8.300z" fill="#00c880" />
      <path d="M728 583l218.400-8.200-7.700 33.500-218 8.400z" fill="#00c880" />
      <path d="M181 637.300l221-8.300-.3 5.700-219.700 8.100z" fill="#00853d" />
      <path d="M720.700 616.700l218-8.400 1.300 5.700-219.700 8.700z" fill="#00853d" />
      <path d="M182 642.800l219.700-8.100 4.300 18.600-218 8.200z" fill="url(#dark)" />
      <path d="M182 642.800l60 5 162-3.800 2 9.300-218 8.200z" fill="#00443c" opacity=".85" />
      <path d="M720.300 622.700l219.700-8.700 4.300 19L724 641z" fill="#004800" />
      <path d="M720.300 622.700l38-1.500-36 9z" fill="#00443c" opacity=".8" />

      <g {...edge}>
        <path d="M190 597.300l7.300-40.600L955.700 528l6.300 25-17.700 80L724 641l-3.700-18.300 219.700-8.700 4.300 19" />
        <path d="M190 597.300l219.300-9c0-9 6-13.300 15.700-13.600L718.300 563.700c6 0 10 4 10 13l218.400-8.400 9-40.300" />
        <path d="M190 597.300l-9 40 221-8.300-.3 5.700L182 642.800l-1-5.500M182 642.800l6 18.700 218-8.200-4.300-18.600M406 653.300l9.700-47" />
        <path d="M728.300 576.700l-7.600 40 218-8.400 8-40M720.700 616.700l-.4 6M938.700 608.300l1.300 5.700M404 629.300l317-12.800" />
      </g>
      <path
        d="M189.500 603.800l219.500-9M728 583l218.400-8.200M425 574.700l6.700 24.600 295-11M409.300 588.300l6.400 18c2-4 7-6 16-7M718.300 563.700l5 24M409 595l-7 34"
        fill="none"
        stroke="#1b6f86"
        strokeWidth=".8"
      />
      <g fill="url(#hole)" stroke="#1c7088" strokeWidth=".8">
        <ellipse cx="317" cy="615.600" rx="10.500" ry="7" transform="rotate(-6 317 615.600)" />
        <ellipse cx="814.300" cy="596.600" rx="10.500" ry="7" transform="rotate(-6 814.300 596.600)" />
        <ellipse cx="874" cy="594.300" rx="10.500" ry="7" transform="rotate(-6 874 594.300)" />
      </g>

      <path d="M568 582l11-54" stroke="#2c8c30" strokeWidth="1.500" />
      <path d="M583 514l.500 13c-2 2-5 2-7 0z" fill="#38a838" />
      <ellipse cx="580" cy="527.500" rx="3.500" ry="2.500" fill="#145020" />
      <path d="M568 582l-14-62" stroke="#0428a8" strokeWidth="2" />
      <path d="M550.300 504l6.700 16c-2 2-5 2-7 1z" fill="#0428a8" />
      <path d="M568 582l81-3" stroke="#e03838" strokeWidth="2" />
      <path d="M671 578.500l-22-3v7z" fill="#d83030" />
      <g fontFamily="Noto Sans, sans-serif" fontSize="13">
        <text x="553" y="502" fill="#2040e8">ZM</text>
        <text x="562" y="512" fill="#2f8f38">YM</text>
        <text x="655" y="574" fill="#e03030">XM</text>
      </g>

      <path d="M48.300 860l23.400-.7L75 875l-2.700 16.700L48 892l-3-16z" fill="#d2d3d5" />
      <path d="M48.300 860l23.400-.7L75 875l-2.700 16.700L48 892l-3-16zM45 876l30-1M51 892l5-16M72 892l-5-17 5-16M56 876l-7-16" fill="none" stroke="#b0b2b4" />
      <path d="M49 893l4-24M53 866l-3 6h5z" stroke="#a9cba8" strokeWidth="1.500" fill="#a9cba8" />
      <path d="M48.500 893L44 872" stroke="#0a2cb8" strokeWidth="3" />
      <path d="M42.500 864l5 9h-6z" fill="#0a2cb8" />
      <path d="M49 893.500h31" stroke="#d03030" strokeWidth="2.200" />
      <path d="M88 892.500l-10-3v6z" fill="#c82828" />
      <circle cx="48.500" cy="893.500" r="4" fill="#a8aaac" />
      <circle cx="47.500" cy="892.500" r="2.500" fill="#f4f4f4" />
      <g fontFamily="Noto Sans, sans-serif" fontSize="12">
        <text x="37" y="864" fill="#2040d8">Z</text>
        <text x="51" y="866" fill="#a9cba8">Y</text>
        <text x="89" y="896" fill="#d83030">X</text>
      </g>
    </svg>
  );
}

function Watermark() {
  return (
    <div className="absolute right-2 bottom-3 flex items-center gap-2 text-[#f2f3f5]">
      <svg viewBox="0 0 72 82" className="h-[82px] w-[72px] shrink-0" aria-hidden="true">
        <path d="M36 0L50 8c5 8 6 14 5 22L36 18 18 29l-2-12L0 21 16 12z" fill="#cbe6f4" />
        <path d="M0 21c16-9 30-9 44 2L36 18 16 30v13C8 48 3 54 0 62z" fill="#b3dcf2" />
        <path d="M16 30v22l4 3c-4 6-3 14 2 19L0 62c2-10 8-17 16-19z" fill="#9bd2ef" />
        <path d="M50 8l22 13v21c-3 8-8 14-16 18V30c0-8-2-16-6-22z" fill="#84cdef" />
        <path d="M56 52c8-3 13-6 16-12v22L58 69c-13 2-24-2-33-11l11 6z" fill="#74c0e6" />
        <path d="M16 52l9 5c8 10 20 14 33 12L36 82 22 74c-4-6-6-13-6-22z" fill="#74c8ef" />
        <path d="M50 8c5 8 7 16 6 24M0 21c12-7 26-8 36-3M0 62c2-10 8-17 16-20M16 52c0 9 2 16 6 22M25 57c9 9 20 14 33 12M56 60c8-4 13-10 16-18" fill="none" stroke="#e9f2f7" strokeWidth="1.200" />
        <path d="M36 18l20 12v22L36 64 16 52V30z" fill="#e9f1f6" />
        <path d="M36 22l16 9-16 9-16-9z" fill="#b3dcf2" />
        <path d="M20 31.500l15.500 9V59L20 50z" fill="#9bd2ef" />
        <path d="M52 31.500l-15.500 9V59L52 50z" fill="#74c0e6" />
      </svg>
      <div className="flex flex-col">
        <div className="flex items-center font-['Liberation_Sans','Noto_Sans_CJK_SC',sans-serif] leading-[46px] font-bold whitespace-nowrap">
          <span className="text-[47px]">3D</span>
          <span className="text-[39px]">世界网</span>
        </div>
        <div className="font-['DejaVu_Sans',sans-serif] text-[17px] leading-4 font-bold">WWW.3DSJW.COM</div>
      </div>
    </div>
  );
}

function SidePanel() {
  return (
    <aside className="w-4 shrink-0 overflow-hidden bg-white">
      <div className="flex h-7 items-center pl-3 pt-1">
        <span className="h-[11px] w-3 shrink-0 border-2 border-[#222] bg-white" />
      </div>
      <div className="ml-[9px] border-t border-l-2 border-[#cfcfcf] pl-px pt-0.5">
        <div className="h-5 border-b border-[#c0c0c0] bg-[#ededed]" />
        {Array.from({ length: 32 }, (_, i) => (
          <div
            key={i}
            className={"flex h-5 items-center border-b border-[#e2e2e2] " + (i % 2 ? "bg-[#fafafa]" : "bg-white")}
          >
            {i === 0 && <span className="ml-[3px] size-2 shrink-0 rounded-full border-2 border-[#e0a040] bg-[#2848b0]" />}
          </div>
        ))}
      </div>
      <div className="ml-[9px] h-[5px] border border-[#999] bg-[#d2d2d2]" />
      <div className="mt-[22px] ml-[9px] h-0.5 bg-[#cfcfcf]" />
      <div className="mt-[22px] ml-[9px] h-0.5 bg-[#cfcfcf]" />
    </aside>
  );
}

export default function App() {
  return (
    <div className="flex min-h-screen flex-col overflow-hidden bg-white font-['Open_Sans','Noto_Sans_CJK_SC',sans-serif]">
      <TitleBar />
      <TabRow />
      <Ribbon />
      <SelectionBar />
      <p className="-ml-2 h-[21px] shrink-0 text-[11px] leading-[19px] font-medium whitespace-nowrap text-black">选择现有的坐标系</p>
      <div className="flex flex-1">
        <main className="flex min-w-0 flex-1 flex-col border-r border-[#7d888c]">
          <div className="flex h-[23px] shrink-0 border-b-2 border-[#4f9fb8] bg-white">
            <div className="flex w-[109px] items-center bg-[#539fb8] text-[12px] whitespace-nowrap text-white">
              <svg viewBox="0 0 12 16" className="mr-[3px] h-4 w-3 shrink-0" aria-hidden="true">
                <path d="M3 4h9l-3 2H3M3 8h7l-3 2H3" fill="none" stroke="#20404c" />
                <path d="M0 1h3v11l-3 2z" fill="#283a98" />
              </svg>
              第一课.prt
              <svg viewBox="0 0 10 12" className="ml-1.5 h-3 w-2.5 shrink-0" aria-hidden="true">
                <path d="M8 5V4L5.500 1H1v10h7V9M5 1v3h3M4 8l5-3" fill="none" stroke="#fff" strokeWidth="1.300" />
              </svg>
              <button aria-label="关闭" className="ml-1.5">
                <svg viewBox="0 0 8 8" className="size-2" aria-hidden="true">
                  <path d="M.5.500l7 7M7.500.500l-7 7" stroke="#fff" strokeWidth="2" />
                </svg>
              </button>
            </div>
          </div>
          <div className="relative flex-1 overflow-hidden border-b border-[#999] bg-[linear-gradient(to_bottom,#b2b3b5,#cdced0_34%,#e0e2e4_68%,#e7e9eb)]">
            <Model />
            <Watermark />
          </div>
        </main>
        <SidePanel />
      </div>
    </div>
  );
}
